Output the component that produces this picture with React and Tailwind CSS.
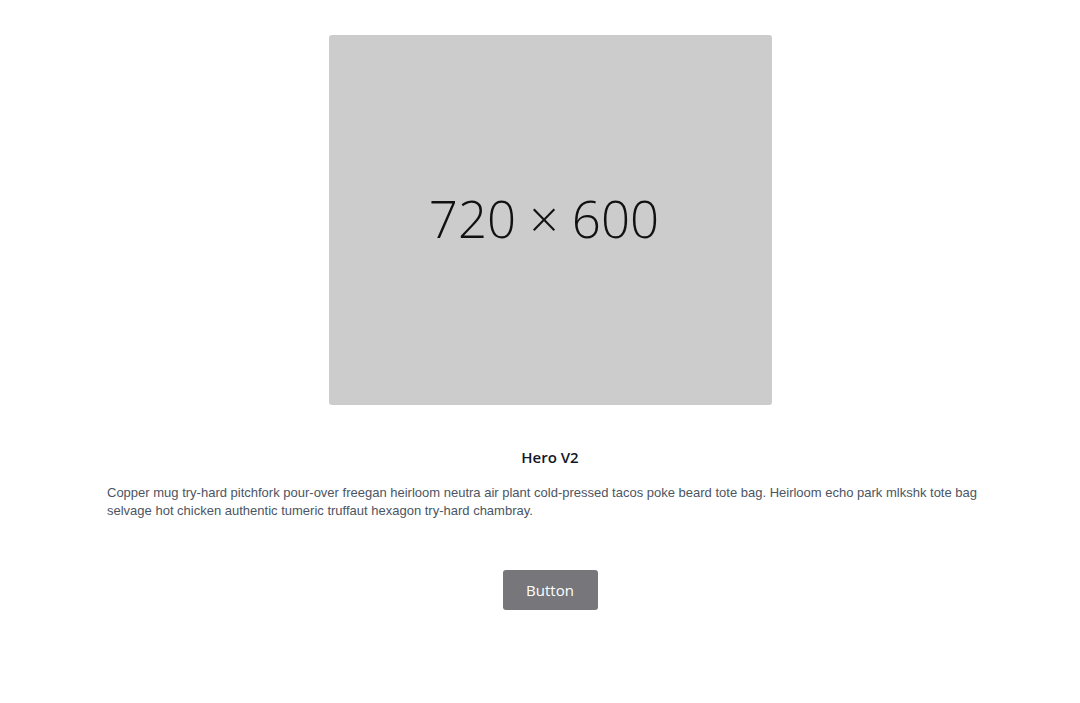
export default function App() {
  return (
    <section className="min-h-screen bg-white pt-[35px] pl-[107px] pr-[87px]" style={{ fontFamily: '"Open Sans", sans-serif' }}>
      <div className="flex flex-col items-center">
        <div className="flex h-[370px] w-[443px] items-center justify-center rounded-[3px] bg-[#cccccc]">
          <span className="pb-[3px] pr-[12px] text-[51px] font-light leading-none text-[#111111]">720 × 600</span>
        </div>

        <h1 className="mt-[42px] text-[15px] font-semibold leading-5 text-[#111827]">Hero V2</h1>

        <p
          className="mt-[17px] self-stretch text-[13px] leading-[18px] text-[#4b5563]"
          style={{ fontFamily: '"Liberation Sans", Arial, sans-serif' }}
        >
          Copper mug try-hard pitchfork pour-over freegan heirloom neutra air plant cold-pressed tacos poke beard tote bag. Heirloom echo park mlkshk tote bag selvage hot chicken authentic tumeric truffaut hexagon try-hard chambray.
        </p>

        <button className="mt-[50px] h-10 w-[95px] rounded-[3px] bg-[#76767b] text-[15px] text-white">
          Button
        </button>
      </div>
    </section>
  );
}
